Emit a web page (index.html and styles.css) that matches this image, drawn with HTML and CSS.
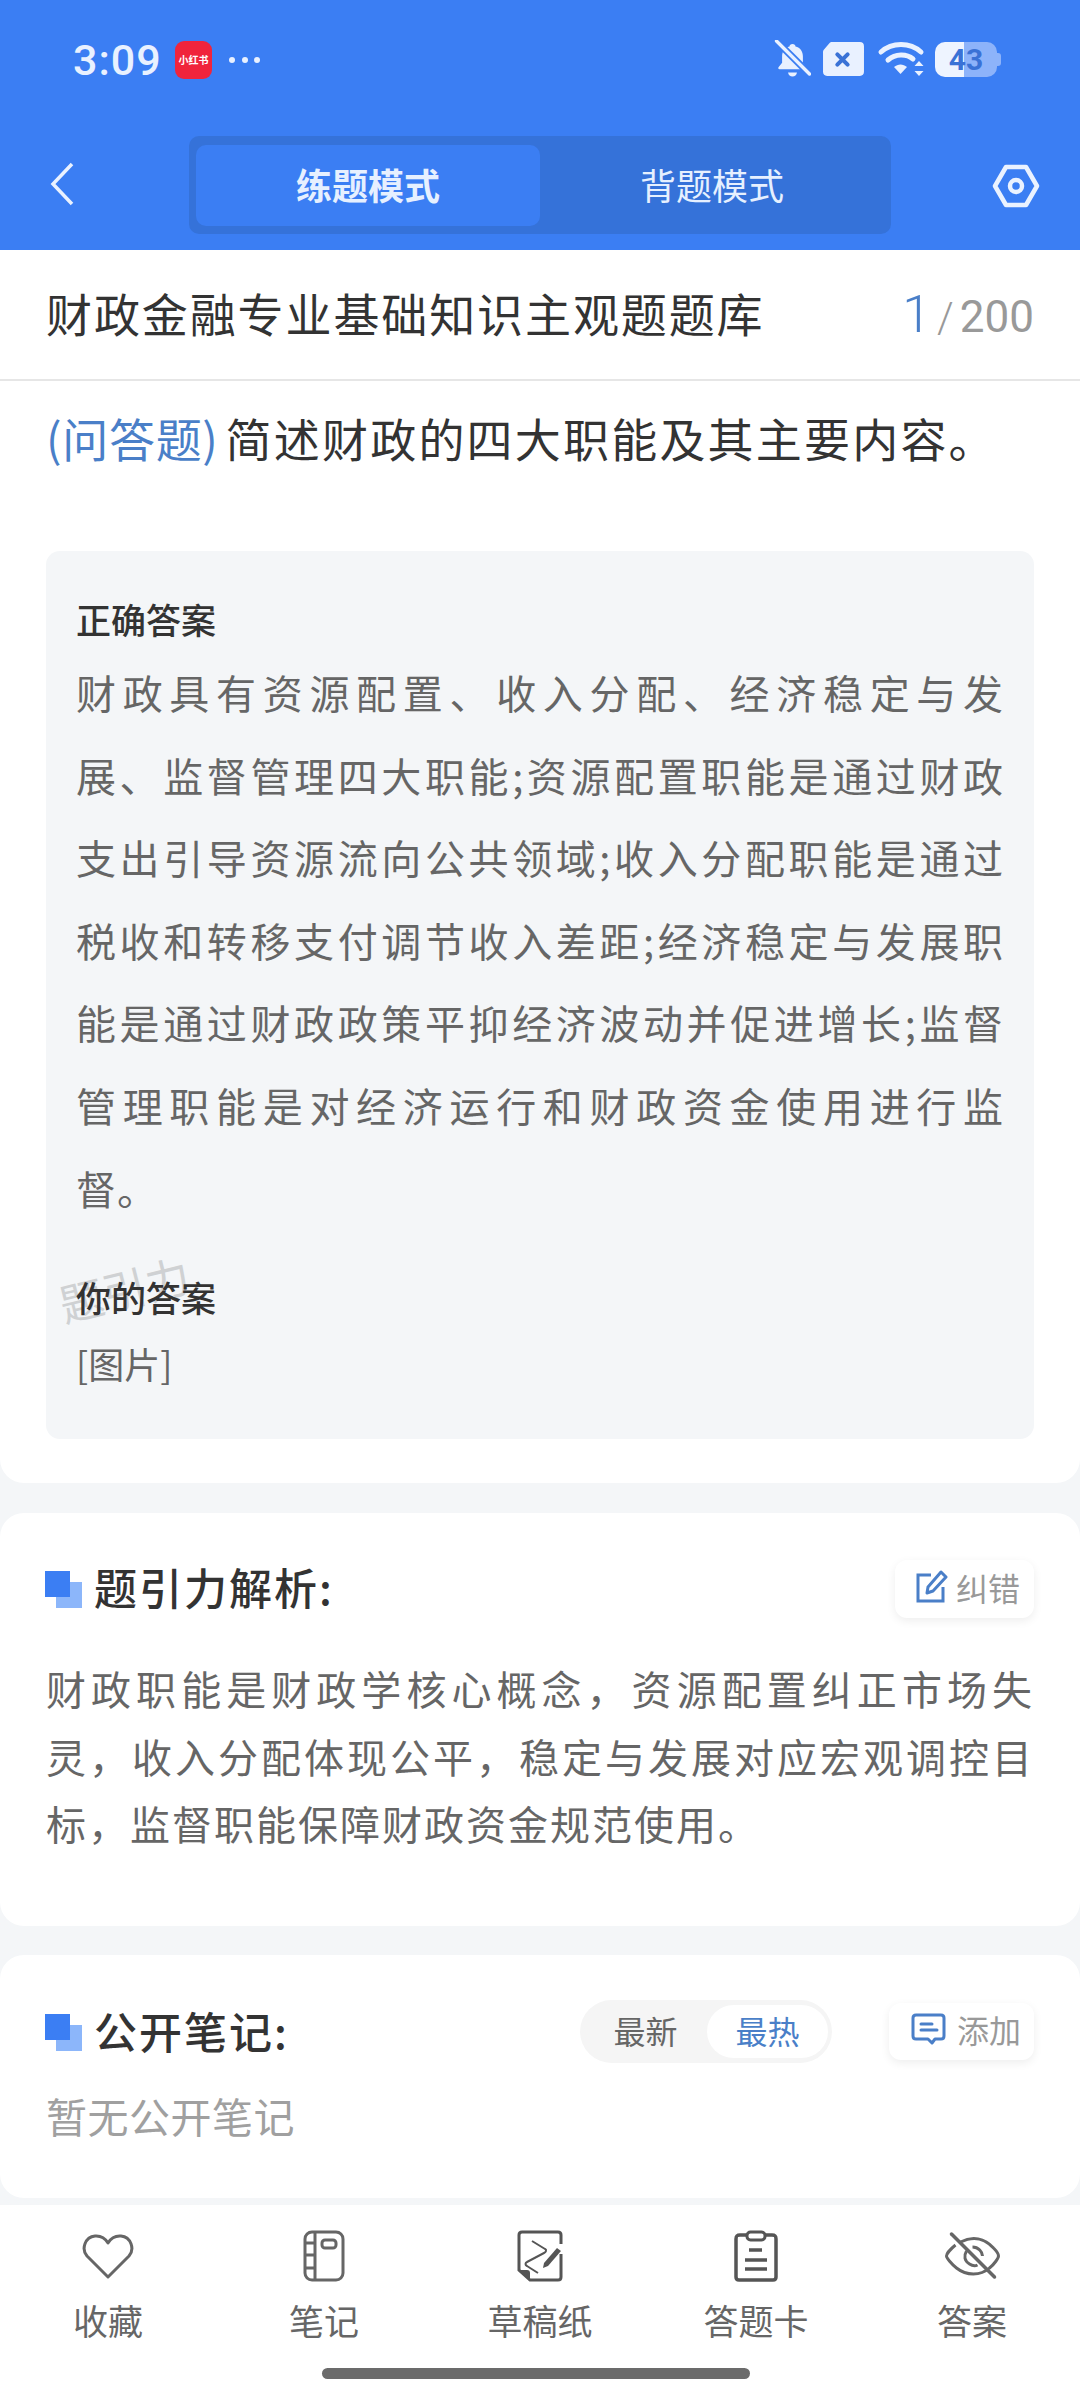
FILE: index.html

```html
<!DOCTYPE html>
<html lang="zh-CN">
<head>
  <meta charset="UTF-8">
  <title>题引力</title>
  <link rel="stylesheet" href="styles.css">
</head>
<body>
  <div class="app">
    <header class="top">
      <div class="status">
        <div class="status-left">
          <span class="time">3:09</span>
          <span class="rb-icon">小红书</span>
          <span class="dots"><i></i><i></i><i></i></span>
        </div>
        <div class="status-right">
          <svg class="ic-bell" width="37" height="38" viewBox="0 0 36 38">
            <path d="M18 4c1.800 0 3 1.200 3 2.600 4.800 1.200 7.400 5 7.400 10v6.200l3.600 4.400c.6.900.1 2-1 2H5c-1.100 0-1.600-1.100-1-2l3.600-4.400v-6.200c0-5 2.600-8.800 7.400-10C15 5.200 16.200 4 18 4z" fill="#e9f1ff"/>
            <path d="M13.500 32.500h9c-.4 2.600-2.200 4-4.500 4s-4.100-1.400-4.500-4z" fill="#e9f1ff"/>
            <path d="M2 1l33 33" stroke="#3b7ef3" stroke-width="7"/>
            <path d="M2 1l33 33" stroke="#e9f1ff" stroke-width="3.400" stroke-linecap="round"/>
          </svg>
          <svg class="ic-sim" width="43" height="36" viewBox="0 0 42 35">
            <path d="M10 1h27c2.500 0 4 1.500 4 4v25c0 2.500-1.500 4-4 4H5c-2.500 0-4-1.500-4-4V11c0-1.400.4-2.300 1.400-3.200L7 2.400C7.900 1.400 8.800 1 10 1z" fill="#e9f1ff"/>
            <path d="M15 13l10 10M25 13L15 23" stroke="#3a72d6" stroke-width="4" stroke-linecap="round"/>
          </svg>
          <svg class="ic-wifi" width="48" height="36" viewBox="0 0 46 36">
            <path d="M3 11C14 1 32 1 43 11" fill="none" stroke="#e9f1ff" stroke-width="5" stroke-linecap="round"/>
            <path d="M10 19c7.500-6.500 18.500-6.500 25 -1" fill="none" stroke="#e9f1ff" stroke-width="5" stroke-linecap="round"/>
            <path d="M16 26c4-3.400 9-3.400 13 0l-6.500 7z" fill="#e9f1ff"/>
            <path d="M41 20l4.500 5h-9zM41 35l4.500-5h-9z" fill="#e9f1ff"/>
          </svg>
          <span class="battery">43</span>
        </div>
      </div>
      <nav class="nav">
        <svg class="back" width="24" height="44" viewBox="0 0 24 44">
          <path d="M22 2L3 22l19 20" fill="none" stroke="#eaf2ff" stroke-width="3.500"/>
        </svg>
        <div class="tabs">
          <span class="tab tab-on">练题模式</span>
          <span class="tab">背题模式</span>
        </div>
        <svg class="gear" width="48" height="44" viewBox="0 0 48 44">
          <path d="M14 3h20l11 19-11 19H14L3 22z" fill="none" stroke="#eaf2ff" stroke-width="4.500" stroke-linejoin="round"/>
          <circle cx="24" cy="22" r="6" fill="none" stroke="#eaf2ff" stroke-width="4.500"/>
        </svg>
      </nav>
    </header>

    <main class="scroll">
      <section class="card card-first">
        <div class="title-row">
          <h1 class="title">财政金融专业基础知识主观题题库</h1>
          <div class="count"><span class="count-now">1</span><span class="count-sep">/</span><span class="count-all">200</span></div>
        </div>
        <p class="question"><span class="q-type">(问答题)</span>简述财政的四大职能及其主要内容。</p>
        <div class="answer-box">
          <div class="watermark">题引力</div>
          <h3 class="answer-label">正确答案</h3>
          <p class="answer-text">
            <span>财政具有资源配置、收入分配、经济稳定与发</span>
            <span>展、监督管理四大职能;资源配置职能是通过财政</span>
            <span>支出引导资源流向公共领域;收入分配职能是通过</span>
            <span>税收和转移支付调节收入差距;经济稳定与发展职</span>
            <span>能是通过财政政策平抑经济波动并促进增长;监督</span>
            <span>管理职能是对经济运行和财政资金使用进行监</span>
            督。
          </p>
          <h3 class="answer-label answer-label-2">你的答案</h3>
          <p class="my-answer">[图片]</p>
        </div>
      </section>

      <section class="card card-parse">
        <div class="card-head">
          <h2 class="head-title"><span class="squares"></span>题引力解析:</h2>
          <span class="mini-btn">
            <svg width="32" height="33" viewBox="0 0 32 33">
              <path d="M15 5H2v26h25V17" fill="none" stroke="#4a7fc8" stroke-width="3"/>
              <path d="M25 2l5 5-13 14-6 2 1-6z" fill="none" stroke="#4a7fc8" stroke-width="3" stroke-linejoin="round"/>
            </svg>
            纠错
          </span>
        </div>
        <p class="parse-text">
          <span>财政职能是财政学核心概念，资源配置纠正市场失</span>
          <span>灵，收入分配体现公平，稳定与发展对应宏观调控目</span>
          标，监督职能保障财政资金规范使用。
        </p>
      </section>

      <section class="card card-notes">
        <div class="card-head card-head-notes">
          <h2 class="head-title"><span class="squares"></span>公开笔记:</h2>
          <div class="toggle">
            <span class="toggle-item">最新</span>
            <span class="toggle-item toggle-on">最热</span>
          </div>
          <span class="mini-btn mini-btn-add">
            <svg width="35" height="32" viewBox="0 0 35 32">
              <path d="M5 2h25c2 0 3 1 3 3v18c0 2-1 3-3 3h-6l-3 4-4-4H5c-2 0-3-1-3-3V5c0-2 1-3 3-3z" fill="none" stroke="#4a7fc8" stroke-width="3" stroke-linejoin="round"/>
              <path d="M10 11h11M10 17h16" stroke="#4a7fc8" stroke-width="3" stroke-linecap="round"/>
            </svg>
            添加
          </span>
        </div>
        <p class="empty">暂无公开笔记</p>
      </section>
    </main>

    <footer class="bottom">
      <div class="tools">
        <div class="tool">
          <svg width="52" height="52" viewBox="0 0 52 50">
            <path d="M26 46L5 25C-1 18 3 6 13 5c6-.5 10 2 13 7 3-5 7-7.500 13-7 10 1 14 13 8 20z" fill="none" stroke="#666" stroke-width="3" stroke-linejoin="round"/>
          </svg>
          <span>收藏</span>
        </div>
        <div class="tool">
          <svg width="42" height="52" viewBox="0 0 42 52">
            <rect x="2" y="2" width="38" height="48" rx="7" fill="none" stroke="#666" stroke-width="3"/>
            <path d="M12 2v48M2 13h10M2 25h10M2 38h10" stroke="#666" stroke-width="3"/>
            <rect x="19" y="10" width="14" height="8" rx="3" fill="none" stroke="#666" stroke-width="3"/>
          </svg>
          <span>笔记</span>
        </div>
        <div class="tool">
          <svg width="46" height="52" viewBox="0 0 46 52">
            <path d="M44 14V5c0-2-1-3-3-3H5C3 2 2 3 2 5v35l11 10h28c2 0 3-1 3-3V24" fill="none" stroke="#555" stroke-width="3"/>
            <path d="M2 40h8c2 0 3 1 3 3v7z" fill="#555"/>
            <path d="M15 11l13 8c2 1 1 3-1 4L10 32c-2 1-2 3 0 4l11 7" fill="none" stroke="#555" stroke-width="2"/>
            <path d="M40 18l4 3-13 15-5 2 1-5z" fill="#555"/>
          </svg>
          <span>草稿纸</span>
        </div>
        <div class="tool">
          <svg width="44" height="52" viewBox="0 0 44 52">
            <path d="M12 5H6C3 5 2 6 2 9v38c0 2 1 3 3 3h34c2 0 3-1 3-3V9c0-3-1-4-4-4h-6" fill="none" stroke="#555" stroke-width="3.500"/>
            <rect x="13" y="2" width="18" height="8" rx="3.500" fill="none" stroke="#555" stroke-width="3"/>
            <path d="M15 20h13M11 30h22M11 39h22" stroke="#555" stroke-width="3.500"/>
          </svg>
          <span>答题卡</span>
        </div>
        <div class="tool">
          <svg width="57" height="52" viewBox="0 -3 56 52">
            <path d="M16 9c12-6 24-4 33 6 3 3 5 6 5 8 0 2-4 8-9 12-9 8-23 8-33 0-5-4-10-10-10-12s4-7 9-11" fill="none" stroke="#666" stroke-width="3"/>
            <path d="M28 14c6 0 10 5 10 9M22 18c-3 5-2 10 3 13 3 2 6 2 8 1" fill="none" stroke="#666" stroke-width="3"/>
            <path d="M7 1l43 43" stroke="#666" stroke-width="3.500" stroke-linecap="round"/>
          </svg>
          <span>答案</span>
        </div>
      </div>
      <div class="home-bar"></div>
    </footer>
  </div>
</body>
</html>
```

FILE: styles.css

```css
* {
  box-sizing: border-box;
}
html, body {
  margin: 0;
  padding: 0;
}
body {
  width: 1080px;
  height: 2400px;
  overflow: hidden;
  background: #f4f6f8;
  font-family: "Noto Sans CJK SC", "Noto Sans", sans-serif;
  color: #333;
}
h1, h2, h3, p {
  margin: 0;
  font-weight: 400;
}
.app {
  height: 2400px;
  display: flex;
  flex-direction: column;
}

/* blue top */
.top {
  height: 250px;
  background: #3b7ef3;
  flex: none;
}
.status {
  height: 120px;
  padding: 0 83px 0 73px;
  display: flex;
  justify-content: space-between;
  align-items: flex-start;
}
.status-left {
  display: flex;
  align-items: center;
  height: 38px;
  margin-top: 41px;
}
.time {
  width: 102px;
  font-family: Roboto, sans-serif;
  font-size: 43px;
  font-weight: 500;
  letter-spacing: 1px;
  color: #e9f1ff;
}
.rb-icon {
  width: 37px;
  height: 38px;
  border-radius: 9px;
  background: #f0243c;
  color: #fff;
  font-size: 10px;
  font-weight: 700;
  line-height: 38px;
  text-align: center;
  white-space: nowrap;
  overflow: hidden;
}
.dots {
  display: flex;
  gap: 6.500px;
  margin-left: 17px;
}
.dots i {
  width: 6px;
  height: 6px;
  border-radius: 50%;
  background: #e9f1ff;
}
.status-right {
  display: flex;
  align-items: center;
  margin-top: 40px;
  height: 38px;
}
.ic-bell {
  margin-right: 11px;
}
.ic-wifi {
  margin: 0 10px 0 12px;
}
.battery {
  position: relative;
  width: 62px;
  height: 35px;
  border-radius: 10px;
  background: linear-gradient(90deg, #eef4ff 0 47%, #8db3fa 47%);
  color: #3a72d6;
  font-family: Roboto, sans-serif;
  font-size: 30px;
  font-weight: 700;
  line-height: 35px;
  text-align: center;
}
.battery::after {
  content: "";
  position: absolute;
  right: -4px;
  top: 11px;
  width: 4px;
  height: 13px;
  border-radius: 0 3px 3px 0;
  background: #8db3fa;
}
.nav {
  height: 130px;
  display: flex;
  align-items: flex-start;
  padding-top: 16px;
}
.back {
  margin: 26px 0 0 50px;
  flex: none;
}
.tabs {
  margin-left: 115px;
  width: 702px;
  height: 98px;
  padding: 9px 7px 8px;
  background: #3572d9;
  border-radius: 10px;
  display: flex;
  flex: none;
}
.tab {
  flex: 1;
  border-radius: 10px;
  font-size: 36px;
  line-height: 79px;
  text-align: center;
  color: #e6f0ff;
}
.tab-on {
  background: #3b7ef3;
  font-weight: 700;
}
.gear {
  margin: 28px 0 0 101px;
  flex: none;
}

/* content */
.scroll {
  flex: 1;
  min-height: 0;
  overflow: hidden;
}
.card {
  background: #fff;
  border-radius: 24px;
}
.card-first {
  border-radius: 0 0 24px 24px;
  padding-bottom: 44px;
}
.title-row {
  height: 131px;
  padding: 0 46px;
  border-bottom: 2px solid #e6e6e6;
  display: flex;
  justify-content: space-between;
  align-items: center;
}
.title {
  padding-bottom: 5px;
  font-size: 46px;
  letter-spacing: 1.900px;
  color: #333;
}
.count {
  display: flex;
  align-items: baseline;
  font-family: Roboto, "Noto Sans", sans-serif;
  color: #999;
}
.count-now {
  font-size: 52px;
  font-weight: 300;
  color: #4a7fc8;
}
.count-sep {
  font-size: 42px;
  margin: 0 6px 0 6px;
  font-weight: 300;
}
.count-all {
  font-size: 44px;
}
.question {
  height: 170px;
  padding: 26px 46px 0;
  font-size: 46px;
  line-height: 60px;
  letter-spacing: 2.200px;
  color: #333;
}
.q-type {
  margin-right: 7px;
  letter-spacing: 0.700px;
  color: #4a7fc8;
}
.answer-box {
  position: relative;
  margin: 0 46px;
  height: 888px;
  padding: 43px 30px 0;
  background: #f4f6f8;
  border-radius: 14px;
}
.watermark {
  position: absolute;
  left: 12px;
  top: 712px;
  font-size: 44px;
  line-height: 50px;
  color: #cfd1d3;
  transform: rotate(-14deg);
}
.answer-label {
  position: relative;
  font-size: 35px;
  line-height: 50px;
  font-weight: 500;
  color: #333;
}
.answer-label-2 {
  margin-top: 43px;
}
.answer-text {
  margin-top: 7px;
  font-size: 40px;
  line-height: 82.600px;
  letter-spacing: 1px;
  color: #666;
}
.answer-text span,
.parse-text span {
  display: block;
  white-space: nowrap;
  text-align: justify;
  text-align-last: justify;
}
.my-answer {
  margin-top: 16px;
  font-size: 36px;
  line-height: 50px;
  color: #666;
}
.card-parse {
  margin-top: 30px;
  padding: 47px 46px 68px;
}
.card-head {
  height: 58px;
  display: flex;
  align-items: center;
  justify-content: space-between;
}
.head-title {
  display: flex;
  align-items: center;
  padding-bottom: 6px;
  font-size: 43px;
  letter-spacing: 2px;
  font-weight: 500;
  color: #333;
}
.squares {
  width: 37px;
  height: 37px;
  margin: 6px 12px 0 -1px;
  flex: none;
  background:
    linear-gradient(#3b7ef3, #3b7ef3) 0 0 / 25px 26px no-repeat,
    linear-gradient(#8cb6fa, #8cb6fa) 100% 100% / 26px 26px no-repeat;
}
.mini-btn {
  width: 139px;
  height: 58px;
  padding: 0 0 5px 21px;
  border-radius: 12px;
  background: #fff;
  box-shadow: 0 3px 10px rgba(0, 0, 0, 0.07);
  display: flex;
  align-items: center;
  gap: 8px;
  font-size: 32px;
  color: #999;
  flex: none;
}
.parse-text {
  margin-top: 37px;
  font-size: 40px;
  line-height: 67.500px;
  letter-spacing: 2px;
  color: #666;
}
.card-notes {
  margin-top: 29px;
  padding: 45px 46px 53px;
}
.card-head-notes {
  height: 63px;
  justify-content: flex-start;
}
.card-notes .head-title {
  padding-bottom: 3px;
}
.toggle {
  margin-left: auto;
  width: 252px;
  height: 63px;
  padding: 5px 4px 5px 4px;
  border-radius: 32px;
  background: #f5f5f5;
  display: flex;
  font-size: 32px;
  line-height: 51px;
  color: #666;
}
.toggle-item {
  flex: 1;
  text-align: center;
}
.toggle-on {
  flex: none;
  width: 121px;
  background: #fff;
  border-radius: 27px;
  color: #4a7fc8;
}
.mini-btn-add {
  width: 145px;
  height: 57px;
  margin-left: 57px;
  padding-left: 22px;
  gap: 11px;
}
.empty {
  margin-top: 22px;
  font-size: 41px;
  line-height: 60px;
  letter-spacing: 0.500px;
  color: #a0a0a0;
}

/* bottom bar */
.bottom {
  height: 195px;
  background: #fff;
  flex: none;
}
.tools {
  height: 150px;
  padding-top: 25px;
  display: grid;
  grid-template-columns: repeat(5, 216px);
}
.tool {
  display: flex;
  flex-direction: column;
  align-items: center;
}
.tool svg {
  height: 52px;
}
.tool span {
  margin-top: 13px;
  font-size: 35px;
  line-height: 50px;
  color: #666;
}
.home-bar {
  width: 428px;
  height: 11px;
  margin: 13px 0 0 322px;
  border-radius: 6px;
  background: #6b6b6b;
}
```
